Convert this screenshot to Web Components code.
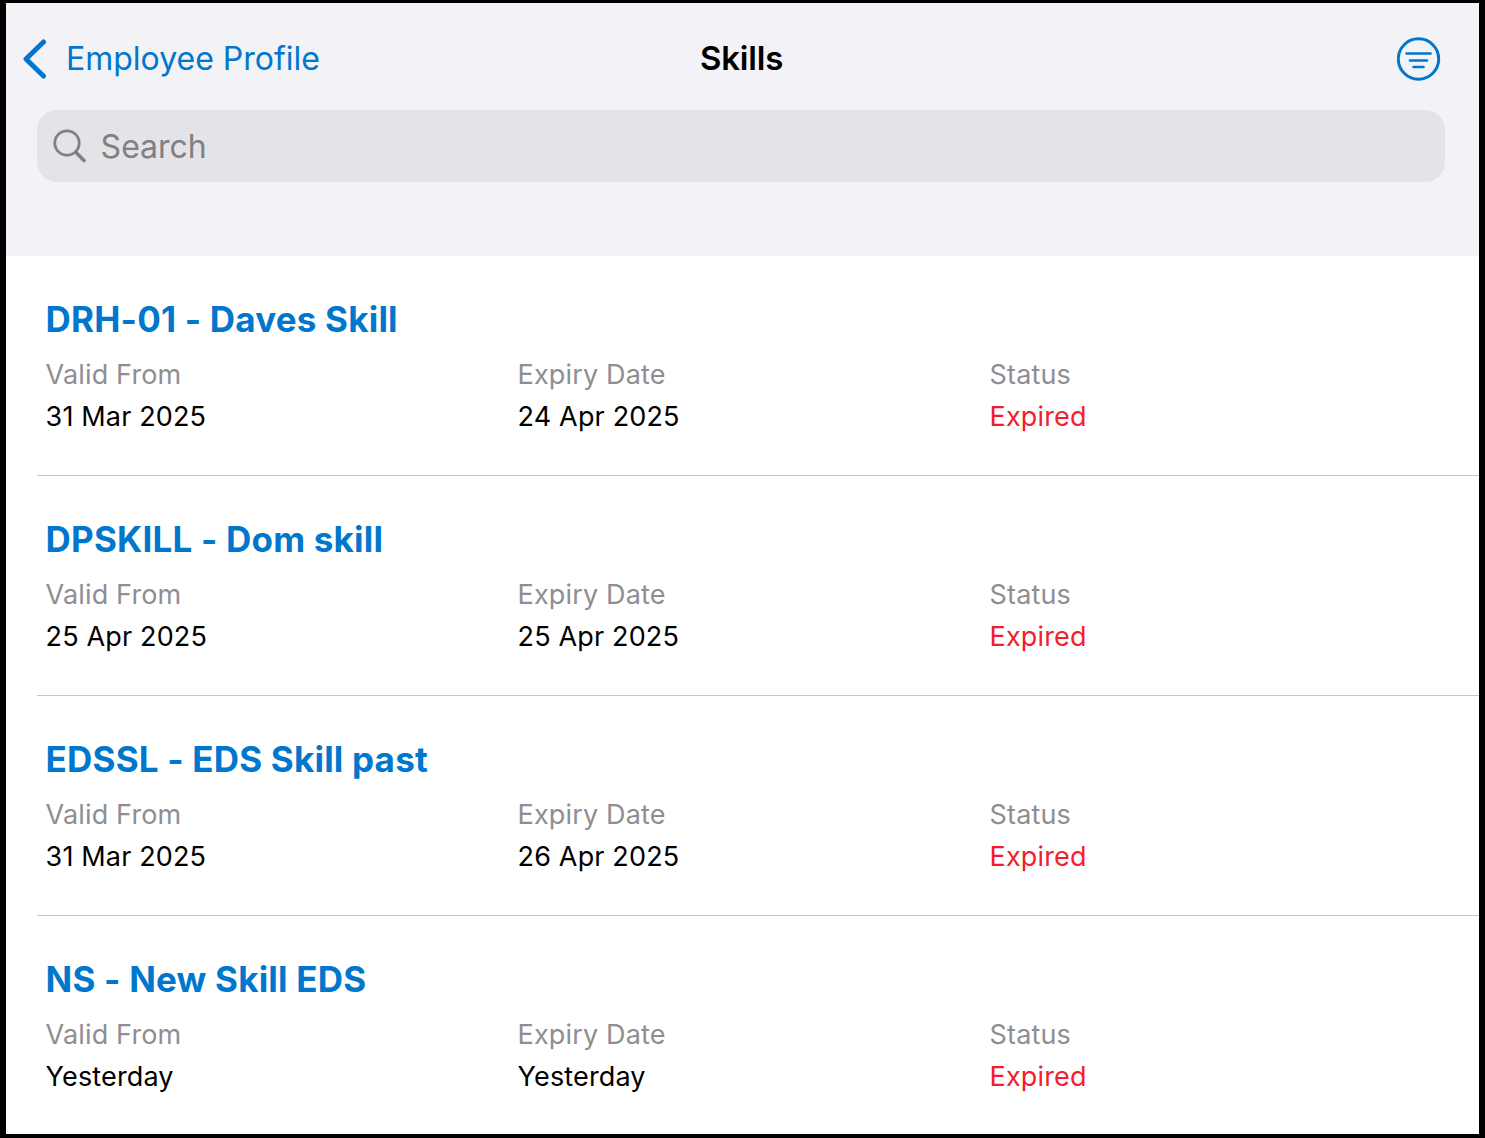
<!DOCTYPE html>
<html>
<head>
<meta charset="utf-8">
<title>Skills</title>
<style>
    html, body { margin: 0; padding: 0; background: #000; }
    body { font-family: Inter, "Noto Sans", sans-serif; }
</style>
</head>
<body>
<skills-screen>
    <nav-bar slot="head" back="Employee Profile" title="Skills"></nav-bar>
    <search-box slot="head" placeholder="Search"></search-box>
    <skill-row name="DRH-01 - Daves Skill" from="31 Mar 2025" expiry="24 Apr 2025" status="Expired"></skill-row>
    <skill-row name="DPSKILL - Dom skill" from="25 Apr 2025" expiry="25 Apr 2025" status="Expired"></skill-row>
    <skill-row name="EDSSL - EDS Skill past" from="31 Mar 2025" expiry="26 Apr 2025" status="Expired"></skill-row>
    <skill-row name="NS - New Skill EDS" from="Yesterday" expiry="Yesterday" status="Expired" last></skill-row>
</skills-screen>

<script>
class SkillsScreen extends HTMLElement {
    constructor() {
        super();
        this.attachShadow({ mode: 'open' });
    }

    connectedCallback() {
        this.shadowRoot.innerHTML = `
      <style>
        :host{
          display:flex;
          flex-direction:column;
          box-sizing:border-box;
          width:1485px;
          height:1138px;
          border-style:solid;
          border-color:#000;
          border-width:3px 6px 4px 6px;
          background:#fff;
          overflow:hidden;
        }
        .head{
          background:#f2f2f7;
          height:253px;
          flex:none;
        }
        .list{ flex:1; background:#fff; }
      </style>
      <div class="head"><slot name="head"></slot></div>
      <div class="list"><slot></slot></div>
    `;
    }
}

class NavBar extends HTMLElement {
    constructor() {
        super();
        this.attachShadow({ mode: 'open' });
    }

    connectedCallback() {
        const back = this.getAttribute('back') ?? '';
        const title = this.getAttribute('title') ?? '';
        this.shadowRoot.innerHTML = `
      <style>
        :host{
          display:grid;
          grid-template-columns:678px auto 1fr;
          align-items:center;
          box-sizing:border-box;
          height:107px;
          padding:4px 38px 0 16px;
          color:#0077cc;
        }
        .back{
          display:flex;
          align-items:center;
          gap:19px;
          font-size:32px;
        }
        .back svg{ display:block; }
        .title{
          margin-top:-2px;
          font-size:33px;
          font-weight:600;
          color:#000;
          letter-spacing:-0.2px;
        }
        .filter{ justify-self:end; display:block; }
      </style>
      <div class="back">
        <svg width="25" height="40" viewBox="0 0 25 40" fill="none" stroke="currentColor" stroke-width="5" stroke-linecap="round" stroke-linejoin="round">
          <path d="M21.5 3 L4 20 L21.5 37"/>
        </svg>
        <span>${back}</span>
      </div>
      <div class="title">${title}</div>
      <svg class="filter" width="44" height="44" viewBox="0 0 44 44" fill="none" stroke="currentColor" stroke-linecap="round">
        <circle cx="21.5" cy="22" r="20.2" stroke-width="3"/>
        <path d="M9.5 16.5 H33.5" stroke-width="2.6"/>
        <path d="M13 23.5 H30" stroke-width="2.6"/>
        <path d="M16.5 30 H26.5" stroke-width="2.6"/>
      </svg>
    `;
    }
}

class SearchBox extends HTMLElement {
    constructor() {
        super();
        this.attachShadow({ mode: 'open' });
    }

    connectedCallback() {
        const placeholder = this.getAttribute('placeholder') ?? '';
        this.shadowRoot.innerHTML = `
      <style>
        :host{
          display:flex;
          align-items:center;
          gap:14.6px;
          box-sizing:border-box;
          height:72px;
          margin:0 34px 0 31px;
          padding:0 0 0 16px;
          background:#e3e3e8;
          border-radius:20px;
          color:#808084;
          font-size:32px;
        }
        svg{ display:block; flex:none; }
      </style>
      <svg width="33" height="34" viewBox="0 0 33 34" fill="none" stroke="currentColor" stroke-linecap="round">
        <circle cx="14" cy="14" r="12.2" stroke-width="2.8"/>
        <path d="M23 23.5 L31 31.5" stroke-width="3.6"/>
      </svg>
      <span>${placeholder}</span>
    `;
    }
}

class SkillRow extends HTMLElement {
    constructor() {
        super();
        this.attachShadow({ mode: 'open' });
    }

    connectedCallback() {
        const col = (label, value, cls = '') => `
        <div>
          <div class="label">${label}</div>
          <div class="value ${cls}">${value}</div>
        </div>`;
        this.shadowRoot.innerHTML = `
      <style>
        :host{
          display:block;
          box-sizing:border-box;
          height:220px;
          margin-left:31px;
          padding:40px 0 0 8.6px;
          border-bottom:1px solid #c6c6c8;
        }
        :host([last]){ border-bottom:none; }
        h2{
          margin:0;
          font-size:35px;
          line-height:46px;
          font-weight:700;
          color:#0077cc;
          letter-spacing:0.2px;
        }
        .cols{
          display:grid;
          grid-template-columns:repeat(3, 472px);
          margin-top:12px;
          font-size:27px;
          line-height:42px;
          letter-spacing:0.15px;
        }
        .label{ color:#8e8e93; }
        .value{ color:#000; }
        .expired{ color:#f31d2b; }
      </style>
      <h2>${this.getAttribute('name') ?? ''}</h2>
      <div class="cols">
        ${col('Valid From', this.getAttribute('from') ?? '')}
        ${col('Expiry Date', this.getAttribute('expiry') ?? '')}
        ${col('Status', this.getAttribute('status') ?? '', 'expired')}
      </div>
    `;
    }
}

customElements.define('skills-screen', SkillsScreen);
customElements.define('nav-bar', NavBar);
customElements.define('search-box', SearchBox);
customElements.define('skill-row', SkillRow);
</script>
</body>
</html>
